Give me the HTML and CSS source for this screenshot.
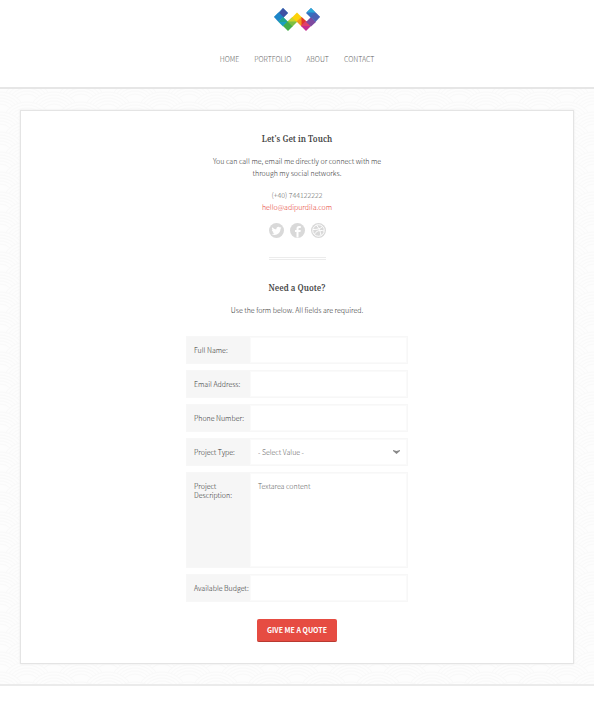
FILE: index.html
```
<!DOCTYPE html>
<html lang="en">

<head>
	<meta charset="UTF-8">
	<meta name="viewport" content="width=device-width, initial-scale=1">
	<title>Contact</title>
	<link rel="stylesheet" href="styles.css">
</head>

<body>
	<header class="site-header">
		<a class="logo" href="#" aria-label="Home">
			<svg width="46" height="23" viewBox="0 0 46 23">
				<path fill="#2a93d2" d="M9 0l5 5-5 5-9-1z" />
				<path fill="#3f51a3" d="M9 0l5 5-5 5-4-5z" />
				<path fill="#1d86c8" d="M4.500 4.500l5 4.500-5 5-4.500-5z" />
				<path fill="#1a9fc0" d="M9 9l5 5-5 4.500-4.500-4.500z" />
				<path fill="#20a58c" d="M9 9l5 5h-9.500z" />
				<path fill="#45ad49" d="M14 13l5 5-5 5-5-5z" />
				<path fill="#7dbf42" d="M18.500 9l5 4.500-5 5-5-5z" />
				<path fill="#c9d52f" d="M18.500 9l4.500 4.500h-9z" />
				<path fill="#fdd20a" d="M23 4.500l5 5-5 4.500-5-4.500z" />
				<path fill="#f39a1e" d="M27.500 9l5 4.500-5 5-5-5z" />
				<path fill="#e2382b" d="M27.500 9l5 4.500-5 5z" />
				<path fill="#c42d91" d="M32 13l5 5-5 5-5-5z" />
				<path fill="#e0406a" d="M32 13l5 5h-10z" />
				<path fill="#7e4aa0" d="M37 9l5 5-5 4.500-5-4.500z" />
				<path fill="#3470c0" d="M37 0l9 9-9 1-5-5z" />
				<path fill="#4a62b4" d="M41.500 4.500l4.500 4.500-4.500 5-5-5z" />
				<path fill="#2ba8d8" d="M37 0l4.500 4.500h-9z" />
			</svg>
		</a>
		<nav class="main-nav">
			<a href="#">HOME</a>
			<a href="#">PORTFOLIO</a>
			<a href="#">ABOUT</a>
			<a href="#">CONTACT</a>
		</nav>
	</header>

	<main class="content">
		<div class="panel">
			<section class="contact">
				<h2>Let's Get in Touch</h2>
				<p class="intro">You can call me, email me directly or connect with me through my social networks.</p>
				<p class="details">
					<span>(+40) 744122222</span><br>
					<a href="mailto:hello@adipurdila.com">hello@adipurdila.com</a>
				</p>
				<div class="social">
					<a href="#" aria-label="Twitter">
						<svg width="15" height="15" viewBox="0 0 30 30">
							<circle cx="15" cy="15" r="15" fill="#d9d9d9" />
							<path fill="#fff" d="M25 9.500c-.8.400-1.500.600-2.400.700.900-.500 1.500-1.300 1.800-2.300-.8.500-1.700.8-2.600 1-2.700-2.800-7.600-.8-7 3.700-3.400-.200-6.400-1.800-8.400-4.300-1.100 2-.6 4.200 1.200 5.500-.7 0-1.300-.2-1.800-.5 0 2 1.400 3.600 3.300 4-.6.200-1.200.2-1.800.1.500 1.600 2 2.800 3.800 2.800-1.700 1.400-3.800 2-6.100 1.700 8.200 5 18.200-.5 18-10.300.8-.5 1.500-1.300 2-2.100z" />
						</svg>
					</a>
					<a href="#" aria-label="Facebook">
						<svg width="15" height="15" viewBox="0 0 30 30">
							<circle cx="15" cy="15" r="15" fill="#d9d9d9" />
							<path fill="#fff" d="M13 29v-11h-3v-4h3v-2.500c0-4 2-5.500 5-5.500h3.500v4h-2.500c-1.500 0-2 .7-2 2v2h4.500l-.5 4h-4v11z" />
						</svg>
					</a>
					<a href="#" aria-label="Dribbble">
						<svg width="15" height="15" viewBox="0 0 30 30">
							<circle cx="15" cy="15" r="15" fill="#d9d9d9" />
							<g fill="none" stroke="#fff" stroke-width="2">
								<circle cx="15" cy="15" r="11.500" />
								<path d="M4 13c8 0 15-1 19-6M11 4c5 6 8 13 9 21M7 23c3-7 10-10 19-7" />
							</g>
						</svg>
					</a>
				</div>
			</section>

			<hr class="divider">

			<section class="quote">
				<h2>Need a Quote?</h2>
				<p class="intro">Use the form below. All fields are required.</p>
				<form class="quote-form">
					<div class="field">
						<label for="name">Full Name:</label>
						<input type="text" id="name">
					</div>
					<div class="field">
						<label for="email">Email Address:</label>
						<input type="email" id="email">
					</div>
					<div class="field">
						<label for="phone">Phone Number:</label>
						<input type="tel" id="phone">
					</div>
					<div class="field">
						<label for="type">Project Type:</label>
						<select id="type">
							<option>- Select Value -</option>
						</select>
					</div>
					<div class="field field-tall">
						<label for="description">Project Description:</label>
						<textarea id="description">Textarea content</textarea>
					</div>
					<div class="field">
						<label for="budget">Available Budget:</label>
						<input type="text" id="budget">
					</div>
					<button type="submit">GIVE ME A QUOTE</button>
				</form>
			</section>
		</div>
	</main>
</body>

</html>
```
FILE: styles.css
```
* {
	box-sizing: border-box;
}

body {
	margin: 0;
	background: #fff;
	color: #333;
	font-family: "Noto Sans CJK JP", "Noto Sans", sans-serif;
	font-size: 7px;
	font-weight: 300;
	line-height: 12px;
}

a {
	color: inherit;
	text-decoration: none;
}

/* header */
.site-header {
	display: flex;
	flex-direction: column;
	align-items: center;
	gap: 22px;
	padding: 8px 0 22px;
}

.logo,
.logo svg {
	display: block;
}

.main-nav {
	display: flex;
	gap: 15px;
	color: #666;
}

/* patterned area behind the panel */
.content {
	padding: 21px 20px 20px;
	border-top: 2px solid #e6e6e6;
	border-bottom: 2px solid #ebebeb;
	background: #fcfcfc url("data:image/svg+xml,%3Csvg xmlns='http://www.w3.org/2000/svg' xmlns:xlink='http://www.w3.org/1999/xlink' width='54' height='20'%3E%3Cdefs%3E%3Cg id='c' fill='%23fdfdfd' stroke='%23f9f9f9'%3E%3Ccircle r='27'/%3E%3Ccircle r='24'/%3E%3Ccircle r='21'/%3E%3Ccircle r='18'/%3E%3Ccircle r='15'/%3E%3C/g%3E%3C/defs%3E%3Cuse xlink:href='%23c' x='27' y='0'/%3E%3Cuse xlink:href='%23c' x='0' y='10'/%3E%3Cuse xlink:href='%23c' x='54' y='10'/%3E%3Cuse xlink:href='%23c' x='27' y='20'/%3E%3Cuse xlink:href='%23c' x='0' y='30'/%3E%3Cuse xlink:href='%23c' x='54' y='30'/%3E%3Cuse xlink:href='%23c' x='27' y='40'/%3E%3C/svg%3E");
}

.panel {
	padding: 22px 20px 21px;
	border: 1px solid #e4e4e4;
	background: #fff;
	box-shadow: 0 0 2px #e8e8e8;
	text-align: center;
}

h2 {
	margin: 0 0 10px;
	color: #444;
	font-family: "Noto Serif", "Liberation Serif", serif;
	font-size: 8px;
	font-weight: 600;
	line-height: 12px;
}

.intro {
	max-width: 180px;
	margin: 0 auto;
}

.details {
	margin: 10px 0;
	color: #666;
}

.details a {
	color: #e63a30;
}

.social {
	display: flex;
	justify-content: center;
	gap: 6px;
}

.social svg {
	display: block;
}

.divider {
	width: 57px;
	height: 3px;
	margin: 19px auto 22px;
	border: solid #ececec;
	border-width: 1px 0;
}

/* quote form */
.quote-form {
	display: flex;
	flex-direction: column;
	align-items: center;
	gap: 6px;
	margin-top: 20px;
}

.field {
	display: flex;
	width: 100%;
	max-width: 222px;
	min-height: 28px;
	border: 1px solid #f7f7f7;
	background: #f6f6f6;
	text-align: left;
}

.field-tall {
	min-height: 96px;
}

.field label {
	flex: 0 0 63px;
	padding: 9px 0 0 7px;
	line-height: 9px;
}

.field input,
.field select,
.field textarea {
	flex: 1;
	min-width: 0;
	margin: 0;
	padding: 0 7px;
	border: 1px solid #fafafa;
	border-radius: 0;
	outline: 0;
	background: #fff;
	color: #666;
	font: inherit;
}

.field select {
	appearance: none;
	background: #fff url("data:image/svg+xml,%3Csvg xmlns='http://www.w3.org/2000/svg' width='7' height='4'%3E%3Cpath d='M0 0l3.500 1 3.500-1v1l-3.500 3-3.500-3z' fill='%23888'/%3E%3C/svg%3E") no-repeat right 6px center;
}

.field textarea {
	padding: 8px 7px;
	line-height: 9px;
	resize: none;
}

button {
	height: 23px;
	margin-top: 11px;
	padding: 0 10px;
	border: 0;
	border-bottom: 1px solid #b93a31;
	border-radius: 2px;
	background: #e64c42;
	color: #fff;
	font: inherit;
	font-weight: bold;
}
```
